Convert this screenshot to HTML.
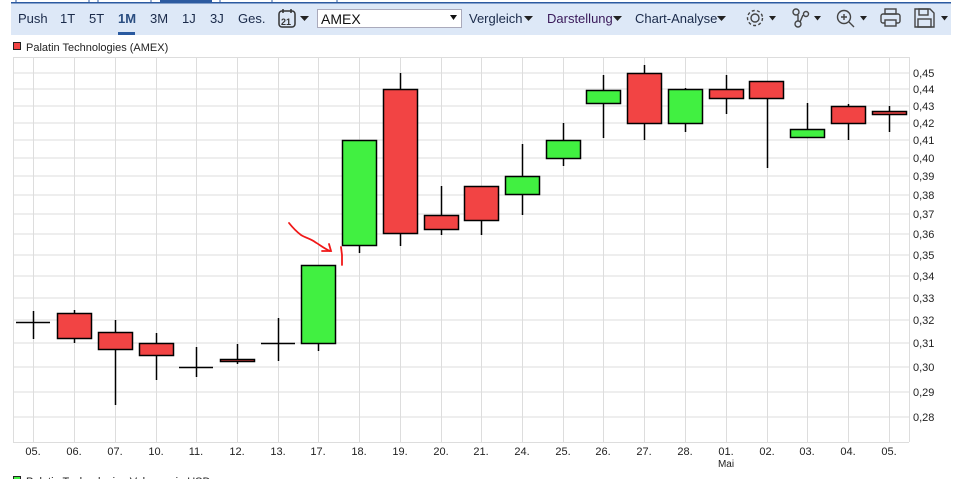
<!DOCTYPE html>
<html><head><meta charset="utf-8"><style>
body{margin:0;width:960px;height:479px;overflow:hidden;background:#fff;font-family:"Liberation Sans",sans-serif}
</style></head><body>
<svg width="960" height="479" xmlns="http://www.w3.org/2000/svg" font-family="Liberation Sans, sans-serif">
<rect x="0" y="0" width="960" height="3" fill="#fff"/>
<g stroke="#2c5aa0" stroke-width="1"><line x1="16" y1="0" x2="16" y2="3"/><line x1="89" y1="0" x2="89" y2="3"/><line x1="98" y1="0" x2="98" y2="3"/><line x1="151" y1="0" x2="151" y2="3"/><line x1="220" y1="0" x2="220" y2="3"/><line x1="272" y1="0" x2="272" y2="3"/><line x1="337" y1="0" x2="337" y2="3"/></g>
<rect x="160" y="0" width="52" height="3" fill="#2c5aa0"/>
<rect x="11" y="3" width="940" height="32" fill="#dde8f7"/>
<rect x="11" y="2" width="940" height="1.5" fill="#2c5aa0"/>
<g font-size="13" fill="#1a2a4a">
<text x="18" y="23">Push</text><text x="60" y="23">1T</text><text x="89" y="23">5T</text>
<text x="118" y="23" font-weight="bold" fill="#2a4d80">1M</text><text x="150" y="23">3M</text><text x="182" y="23">1J</text><text x="210" y="23">3J</text><text x="238" y="23">Ges.</text>
<text x="469" y="23">Vergleich</text><text x="547" y="23" fill="#3a1a5a">Darstellung</text><text x="635" y="23">Chart-Analyse</text>
</g>
<rect x="118" y="32" width="17" height="3" fill="#2a5aa0"/>
<rect x="279" y="11" width="16" height="16" rx="3" fill="none" stroke="#333" stroke-width="1.5"/>
<line x1="283" y1="9" x2="283" y2="13" stroke="#333" stroke-width="1.5"/><line x1="291" y1="9" x2="291" y2="13" stroke="#333" stroke-width="1.5"/>
<text x="281" y="25" font-size="9" font-weight="bold" fill="#333">21</text>
<g fill="#222"><path d="M300 16h9l-4.5 5z"/><path d="M524 16h9l-4.5 5z"/><path d="M613 16h9l-4.5 5z"/><path d="M717 16h9l-4.5 5z"/><path d="M769 16h7l-3.5 4.5z"/><path d="M814 16h7l-3.5 4.5z"/><path d="M860 16h7l-3.5 4.5z"/><path d="M941 16h7l-3.5 4.5z"/></g>
<rect x="317.5" y="9.5" width="144" height="18" fill="#fff" stroke="#aab" />
<text x="321" y="24" font-size="14" fill="#111">AMEX</text>
<path d="M450 15h7l-3.5 5z" fill="#111"/>
<g fill="none" stroke="#444" stroke-width="1.4">
<circle cx="755" cy="18" r="4"/><circle cx="755" cy="18" r="7.5" stroke-dasharray="3 2.3"/>
<circle cx="796" cy="12" r="3"/><circle cx="806" cy="14" r="2.5"/><circle cx="798" cy="24" r="3"/><path d="M798 15l0 6M803 15l-3 7"/>
<circle cx="844" cy="17" r="6.5"/><path d="M849 22l5 5M841 17h6M844 14v6"/>
<rect x="881" y="14" width="19" height="9" rx="2"/><rect x="885" y="9" width="11" height="5"/><rect x="885" y="20" width="11" height="6" fill="#dde8f7"/>
<path d="M915 9h15l4 4v14h-19z"/><rect x="919" y="9" width="9" height="6"/><rect x="918" y="19" width="13" height="8"/>
</g>
<rect x="13.5" y="42.5" width="7" height="7" fill="#f24444" stroke="#222"/>
<text x="26" y="51" font-size="11" fill="#222">Palatin Technologies (AMEX)</text>
<g stroke="#dddddd" stroke-width="1">
<line x1="13" y1="57.5" x2="909" y2="57.5"/>
<line x1="13.5" y1="57" x2="13.5" y2="442"/><line x1="909.5" y1="57" x2="909.5" y2="442"/>
<line x1="13" y1="442.5" x2="909" y2="442.5"/>
<line x1="13" y1="73" x2="909" y2="73"/><line x1="13" y1="89" x2="909" y2="89"/><line x1="13" y1="106" x2="909" y2="106"/><line x1="13" y1="123" x2="909" y2="123"/><line x1="13" y1="140" x2="909" y2="140"/><line x1="13" y1="158" x2="909" y2="158"/><line x1="13" y1="176" x2="909" y2="176"/><line x1="13" y1="195" x2="909" y2="195"/><line x1="13" y1="214" x2="909" y2="214"/><line x1="13" y1="234" x2="909" y2="234"/><line x1="13" y1="255" x2="909" y2="255"/><line x1="13" y1="276" x2="909" y2="276"/><line x1="13" y1="298" x2="909" y2="298"/><line x1="13" y1="320" x2="909" y2="320"/><line x1="13" y1="343" x2="909" y2="343"/><line x1="13" y1="367" x2="909" y2="367"/><line x1="13" y1="392" x2="909" y2="392"/><line x1="13" y1="417" x2="909" y2="417"/>
<line x1="33.5" y1="57" x2="33.5" y2="442"/><line x1="74.5" y1="57" x2="74.5" y2="442"/><line x1="115.5" y1="57" x2="115.5" y2="442"/><line x1="156.5" y1="57" x2="156.5" y2="442"/><line x1="196.5" y1="57" x2="196.5" y2="442"/><line x1="237.5" y1="57" x2="237.5" y2="442"/><line x1="278.5" y1="57" x2="278.5" y2="442"/><line x1="318.5" y1="57" x2="318.5" y2="442"/><line x1="359.5" y1="57" x2="359.5" y2="442"/><line x1="400.5" y1="57" x2="400.5" y2="442"/><line x1="441.5" y1="57" x2="441.5" y2="442"/><line x1="481.5" y1="57" x2="481.5" y2="442"/><line x1="522.5" y1="57" x2="522.5" y2="442"/><line x1="563.5" y1="57" x2="563.5" y2="442"/><line x1="603.5" y1="57" x2="603.5" y2="442"/><line x1="644.5" y1="57" x2="644.5" y2="442"/><line x1="685.5" y1="57" x2="685.5" y2="442"/><line x1="726.5" y1="57" x2="726.5" y2="442"/><line x1="767.5" y1="57" x2="767.5" y2="442"/><line x1="807.5" y1="57" x2="807.5" y2="442"/><line x1="848.5" y1="57" x2="848.5" y2="442"/><line x1="889.5" y1="57" x2="889.5" y2="442"/>
</g>
<g font-size="11" fill="#222">
<text x="913" y="77">0,45</text><text x="913" y="93">0,44</text><text x="913" y="110">0,43</text><text x="913" y="127">0,42</text><text x="913" y="144">0,41</text><text x="913" y="162">0,40</text><text x="913" y="180">0,39</text><text x="913" y="199">0,38</text><text x="913" y="218">0,37</text><text x="913" y="238">0,36</text><text x="913" y="259">0,35</text><text x="913" y="280">0,34</text><text x="913" y="302">0,33</text><text x="913" y="324">0,32</text><text x="913" y="347">0,31</text><text x="913" y="371">0,30</text><text x="913" y="396">0,29</text><text x="913" y="421">0,28</text>
</g>
<g font-size="11" fill="#222" text-anchor="middle">
<text x="33" y="455">05.</text><text x="74" y="455">06.</text><text x="115" y="455">07.</text><text x="156" y="455">10.</text><text x="196" y="455">11.</text><text x="237" y="455">12.</text><text x="278" y="455">13.</text><text x="318" y="455">17.</text><text x="359" y="455">18.</text><text x="400" y="455">19.</text><text x="441" y="455">20.</text><text x="481" y="455">21.</text><text x="522" y="455">24.</text><text x="563" y="455">25.</text><text x="603" y="455">26.</text><text x="644" y="455">27.</text><text x="685" y="455">28.</text><text x="726" y="455">01.</text><text x="767" y="455">02.</text><text x="807" y="455">03.</text><text x="848" y="455">04.</text><text x="889" y="455">05.</text>
<text x="726" y="467" font-size="10">Mai</text>
</g>
<g stroke="#000" stroke-width="1.5">
<line x1="33.5" y1="311" x2="33.5" y2="339"/><line x1="16" y1="322.5" x2="50" y2="322.5"/>
<line x1="74.5" y1="310" x2="74.5" y2="343"/><rect x="57.5" y="313.5" width="34" height="25" fill="#f24444"/>
<line x1="115.5" y1="320" x2="115.5" y2="405"/><rect x="98.5" y="332.5" width="34" height="17" fill="#f24444"/>
<line x1="156.5" y1="333" x2="156.5" y2="380"/><rect x="139.5" y="343.5" width="34" height="12" fill="#f24444"/>
<line x1="196.5" y1="347" x2="196.5" y2="377"/><line x1="179" y1="367.5" x2="213" y2="367.5"/>
<line x1="237.5" y1="344" x2="237.5" y2="364"/><rect x="220.5" y="359.5" width="34" height="2" fill="#f24444"/>
<line x1="278.5" y1="318" x2="278.5" y2="361"/><line x1="261" y1="343.5" x2="295" y2="343.5"/>
<line x1="318.5" y1="265" x2="318.5" y2="351"/><rect x="301.5" y="265.5" width="34" height="78" fill="#41f041"/>
<line x1="359.5" y1="140" x2="359.5" y2="253"/><rect x="342.5" y="140.5" width="34" height="105" fill="#41f041"/>
<line x1="400.5" y1="73" x2="400.5" y2="246"/><rect x="383.5" y="89.5" width="34" height="144" fill="#f24444"/>
<line x1="441.5" y1="186" x2="441.5" y2="235"/><rect x="424.5" y="215.5" width="34" height="14" fill="#f24444"/>
<line x1="481.5" y1="186" x2="481.5" y2="235"/><rect x="464.5" y="186.5" width="34" height="34" fill="#f24444"/>
<line x1="522.5" y1="144" x2="522.5" y2="215"/><rect x="505.5" y="176.5" width="34" height="18" fill="#41f041"/>
<line x1="563.5" y1="123" x2="563.5" y2="166"/><rect x="546.5" y="140.5" width="34" height="18" fill="#41f041"/>
<line x1="603.5" y1="75" x2="603.5" y2="138"/><rect x="586.5" y="90.5" width="34" height="13" fill="#41f041"/>
<line x1="644.5" y1="65" x2="644.5" y2="140"/><rect x="627.5" y="73.5" width="34" height="50" fill="#f24444"/>
<line x1="685.5" y1="88" x2="685.5" y2="132"/><rect x="668.5" y="89.5" width="34" height="34" fill="#41f041"/>
<line x1="726.5" y1="75" x2="726.5" y2="114"/><rect x="709.5" y="89.5" width="34" height="9" fill="#f24444"/>
<line x1="767.5" y1="81" x2="767.5" y2="168"/><rect x="749.5" y="81.5" width="34" height="17" fill="#f24444"/>
<line x1="807.5" y1="103" x2="807.5" y2="137"/><rect x="790.5" y="129.5" width="34" height="8" fill="#41f041"/>
<line x1="848.5" y1="104" x2="848.5" y2="140"/><rect x="831.5" y="106.5" width="34" height="17" fill="#f24444"/>
<line x1="889.5" y1="106" x2="889.5" y2="132"/><rect x="872.5" y="111.5" width="34" height="3" fill="#f24444"/>
</g>
<g fill="none" stroke="#f01818" stroke-width="1.8" stroke-linecap="round">
<path d="M289 223c4 5 8 9 12 12c5 3 10 4 14 7c5 3 10 7 15 9"/>
<path d="M322 251l9 0l-2 -7"/>
<path d="M341 247l1 8l0 10"/>
</g>
<rect x="13.5" y="476.5" width="7" height="7" fill="#41f041" stroke="#222"/>
<text x="26" y="485" font-size="11" fill="#222">Palatin Technologies Volumen in USD</text>
</svg>
</body></html>
